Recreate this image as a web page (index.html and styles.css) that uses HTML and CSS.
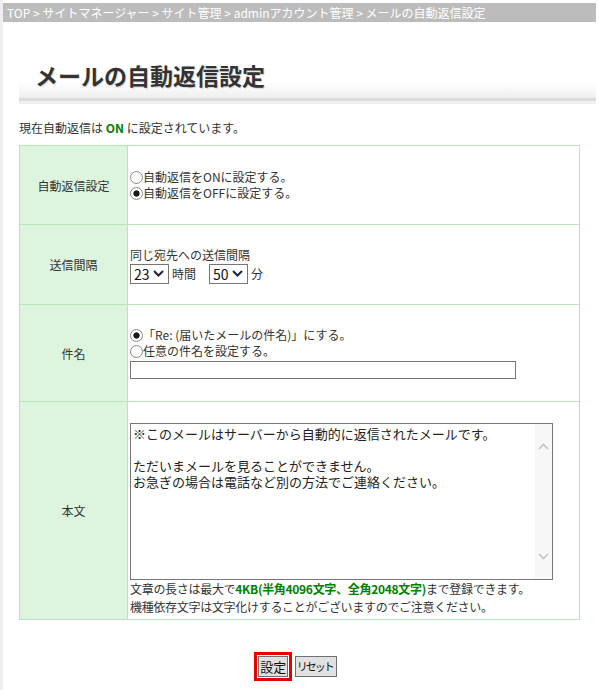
FILE: index.html
```html
<!DOCTYPE html>
<html lang="ja">
<head>
    <meta charset="UTF-8">
    <meta name="viewport" content="width=device-width, initial-scale=1.0">
    <title>メールの自動返信設定</title>
    <link rel="stylesheet" href="styles.css">
</head>
<body>
    <div class="page">
        <div class="breadcrumb">TOP &gt; サイトマネージャー &gt; サイト管理 &gt; adminアカウント管理 &gt; メールの自動返信設定</div>

        <div class="content">
            <h1 class="page-title">メールの自動返信設定</h1>

            <p class="status">現在自動返信は <strong>ON</strong> に設定されています。</p>

            <form class="reply-form">
                <table class="form-table">
                    <tr class="row-status">
                        <th>自動返信設定</th>
                        <td>
                            <label class="radio"><input type="radio" name="reply">自動返信をONに設定する。</label>
                            <label class="radio"><input type="radio" name="reply" checked>自動返信をOFFに設定する。</label>
                        </td>
                    </tr>
                    <tr class="row-interval">
                        <th>送信間隔</th>
                        <td>
                            <div class="line">同じ宛先への送信間隔</div>
                            <div class="interval">
                                <select class="select">
                                    <option>23</option>
                                </select>
                                <span class="unit">時間</span>
                                <select class="select select-min">
                                    <option>50</option>
                                </select>
                                <span class="unit">分</span>
                            </div>
                        </td>
                    </tr>
                    <tr class="row-subject">
                        <th>件名</th>
                        <td>
                            <label class="radio"><input type="radio" name="subject" checked>「Re: (届いたメールの件名)」にする。</label>
                            <label class="radio"><input type="radio" name="subject">任意の件名を設定する。</label>
                            <input type="text" class="text-input">
                        </td>
                    </tr>
                    <tr class="row-body">
                        <th>本文</th>
                        <td>
                            <div class="textarea-box">
                                <textarea class="textarea">※このメールはサーバーから自動的に返信されたメールです。

ただいまメールを見ることができません。
お急ぎの場合は電話など別の方法でご連絡ください。</textarea>
                                <div class="scrollbar">
                                    <svg width="11" height="7" viewBox="0 0 11 7"><path d="M1 6 L5.5 1.5 L10 6" fill="none" stroke="#c4c4c4" stroke-width="1.6"/></svg>
                                    <svg width="11" height="7" viewBox="0 0 11 7"><path d="M1 1 L5.5 5.5 L10 1" fill="none" stroke="#c4c4c4" stroke-width="1.6"/></svg>
                                </div>
                            </div>
                            <p class="note">文章の長さは最大で<strong>4KB(半角4096文字、全角2048文字)</strong>まで登録できます。</p>
                            <p class="note">機種依存文字は文字化けすることがございますのでご注意ください。</p>
                        </td>
                    </tr>
                </table>

                <div class="actions">
                    <span class="focus-ring"><button type="submit" class="btn">設定</button></span>
                    <button type="reset" class="btn btn-reset">リセット</button>
                </div>
            </form>
        </div>
    </div>
</body>
</html>
```

FILE: styles.css
```css
* {
    margin: 0;
    padding: 0;
    box-sizing: border-box;
}

body {
    font-family: "Noto Sans CJK JP", sans-serif;
    font-size: 12px;
    color: #333;
    background: #fff;
}

.page {
    min-height: 100vh;
    border-left: 3px solid #efefef;
    padding-top: 3px;
}

.breadcrumb {
    margin-right: 3px;
    height: 19px;
    line-height: 19px;
    padding-left: 4px;
    background: #bcbcbc;
    color: #fff;
    white-space: nowrap;
    overflow: hidden;
}

.content {
    padding: 0 3px 0 16px;
}

.page-title {
    padding: 38px 0 8px 16px;
    font-size: 23px;
    line-height: 30px;
    font-weight: 700;
    color: #333;
    text-shadow: 1px 1px 1px rgba(0, 0, 0, 0.15);
    background: linear-gradient(#fff 78%, #efefef 100%);
    border-bottom: 3px solid #dcdcdc;
    box-shadow: 0 3px 0 #efefef;
}

.status {
    margin-top: 18px;
    line-height: 18px;
}

.status strong,
.note strong {
    color: #008000;
    font-weight: 700;
}

.form-table {
    margin-top: 8px;
    width: 561px;
    border-collapse: collapse;
}

.form-table th,
.form-table td {
    border: 1px solid #bae4ba;
    vertical-align: middle;
}

.form-table th {
    width: 108px;
    background: #ddf5de;
    font-weight: 400;
    text-align: center;
}

.form-table td {
    padding: 0 2px;
}

.row-status { height: 79px; }
.row-interval { height: 80px; }
.row-subject { height: 97px; }
.row-body { height: 218px; }

.row-body td {
    vertical-align: top;
    padding-top: 21px;
}

.radio {
    display: block;
    line-height: 16px;
}

.radio input {
    appearance: none;
    width: 13px;
    height: 13px;
    margin: 0;
    vertical-align: -2px;
    border: 1px solid #8a8a8a;
    border-radius: 50%;
    background: #fff;
}

.radio input:checked {
    background: radial-gradient(circle, #1a1a1a 0 2.8px, #fff 3.4px);
}

.line {
    line-height: 18px;
}

.interval {
    display: flex;
    align-items: center;
    height: 20px;
}

.select {
    appearance: none;
    width: 39px;
    height: 20px;
    padding-left: 3px;
    border: 1px solid #767676;
    border-radius: 0;
    font-family: "Noto Sans CJK JP", sans-serif;
    font-size: 14px;
    line-height: 18px;
    color: #111;
    background: #fff url("data:image/svg+xml,%3Csvg xmlns='http://www.w3.org/2000/svg' width='11' height='7' viewBox='0 0 11 7'%3E%3Cpath d='M1 1 L5.5 5.5 L10 1' fill='none' stroke='%231c2340' stroke-width='2'/%3E%3C/svg%3E") no-repeat right 4px center;
}

.unit {
    margin-left: 3px;
}

.select-min {
    margin-left: 13px;
}

.text-input {
    display: block;
    width: 386px;
    height: 18px;
    margin-top: 2px;
    border: 1px solid #767676;
    border-radius: 0;
}

.textarea-box {
    display: flex;
    width: 423px;
    height: 157px;
    border: 1px solid #767676;
    background: #fff;
}

.textarea {
    flex: 1;
    border: none;
    outline: none;
    resize: none;
    overflow: hidden;
    padding: 2px 2px;
    font-family: "Noto Sans CJK JP", sans-serif;
    font-size: 13px;
    line-height: 16px;
    color: #222;
}

.scrollbar {
    width: 17px;
    background: #f7f7f7;
    display: flex;
    flex-direction: column;
    justify-content: space-between;
    align-items: center;
    padding: 19px 0 19px;
}

.note {
    line-height: 18px;
    letter-spacing: -0.3px;
}

.actions {
    margin-top: 32px;
    text-align: center;
    padding-right: 24px;
}

.focus-ring {
    display: inline-block;
    border: 3px solid #e60000;
    padding: 1px;
    vertical-align: middle;
}

.btn {
    display: block;
    height: 21px;
    padding: 0 1px;
    border: 1px solid #707070;
    border-radius: 0;
    background: #e1e1e1;
    font-family: "Noto Sans CJK JP", sans-serif;
    font-size: 13px;
    line-height: 19px;
    color: #111;
}

.btn-reset {
    display: inline-block;
    vertical-align: middle;
    font-size: 11px;
    letter-spacing: -2px;
    padding: 0 3px 0 1px;
    white-space: nowrap;
}
```
